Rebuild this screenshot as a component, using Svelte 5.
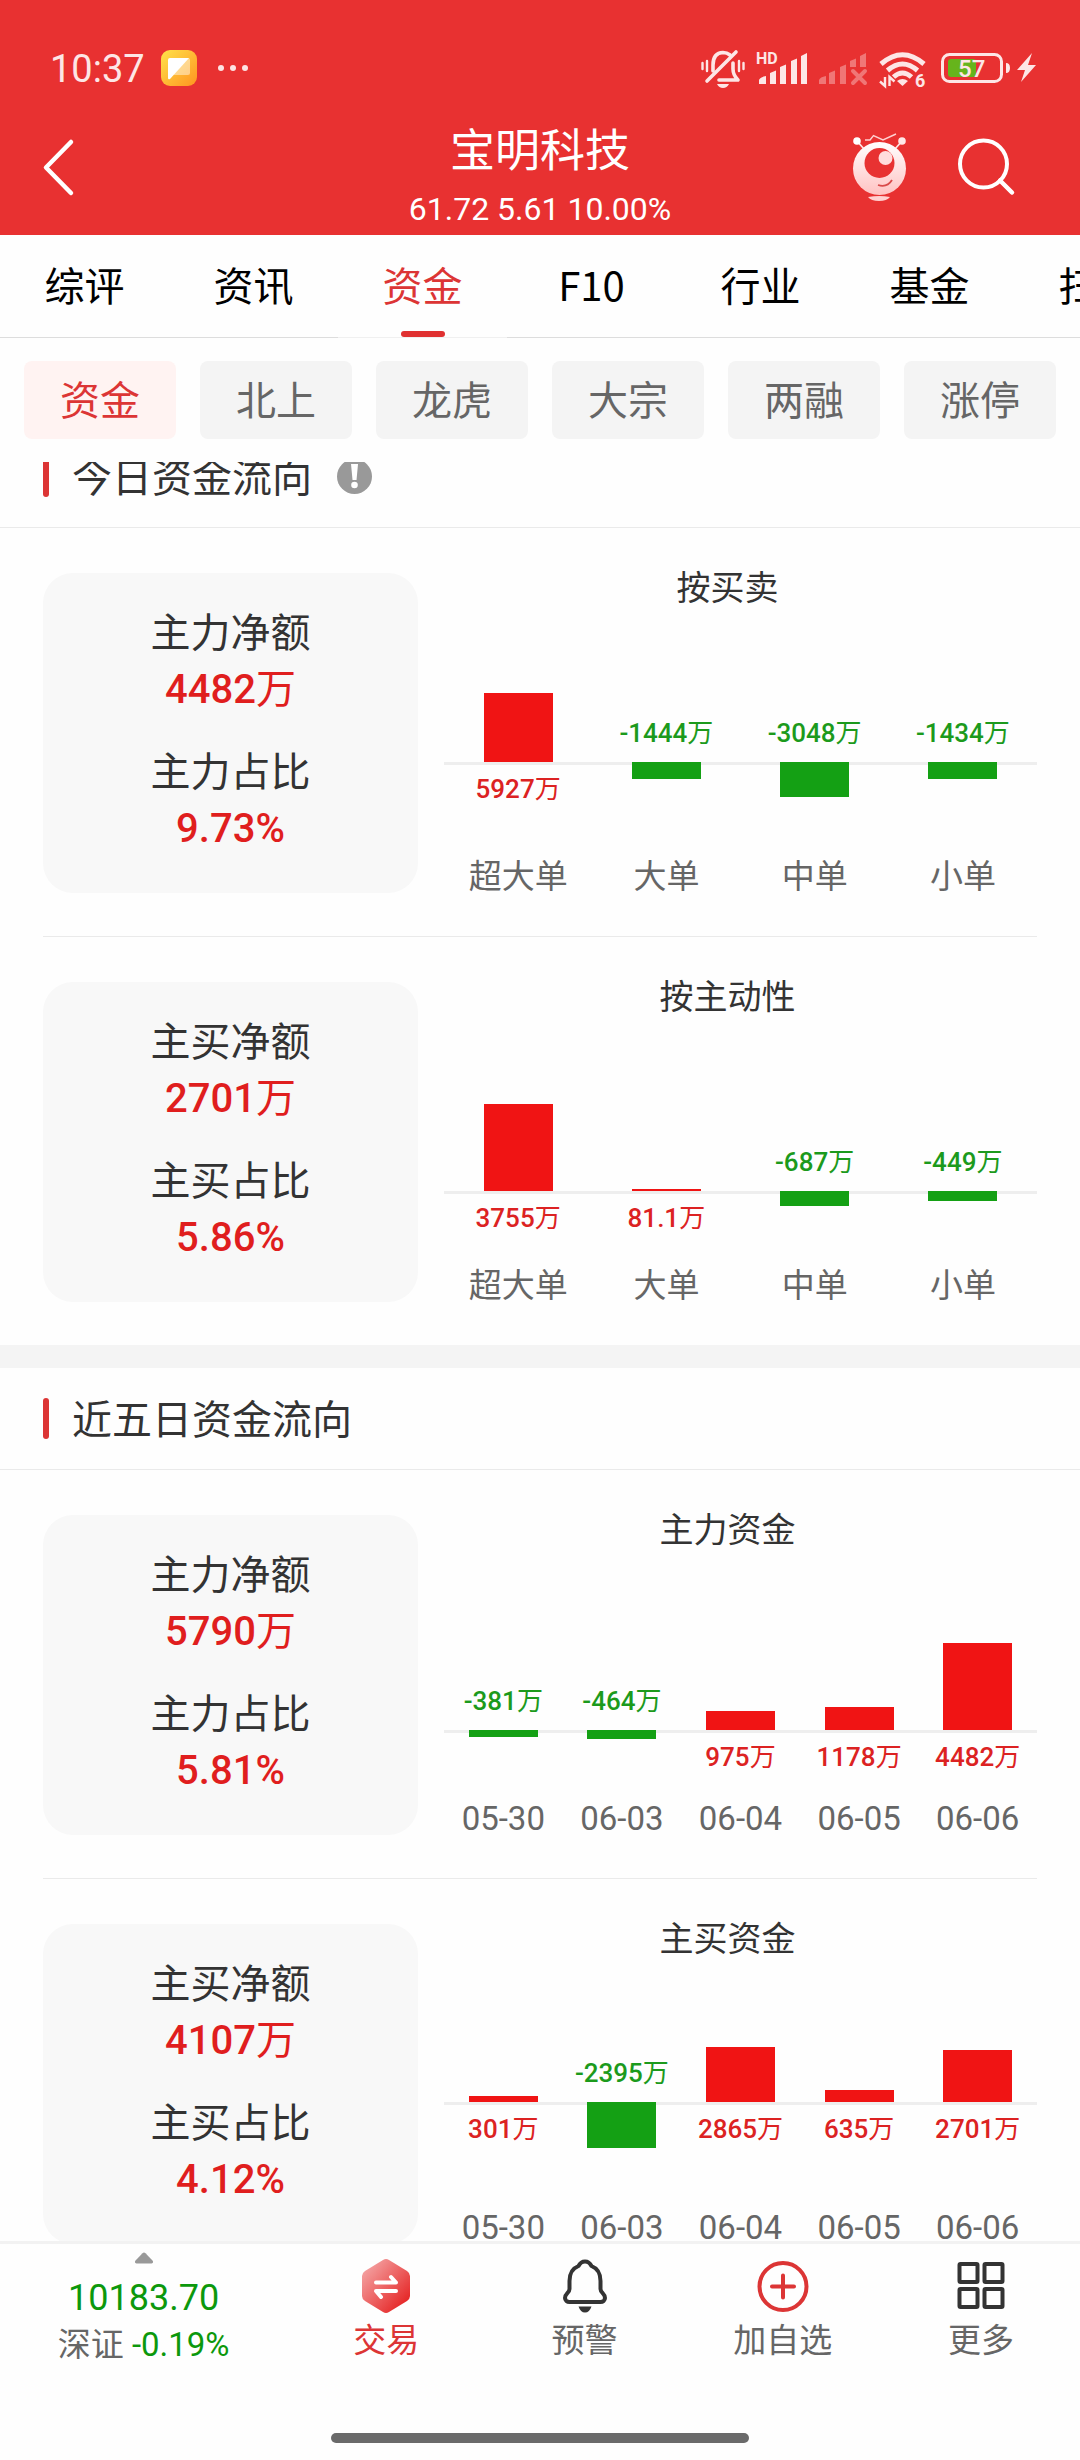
<script>
  const tabs = ['综评', '资讯', '资金', 'F10', '行业', '基金', '扫雷'];
  const filters = ['资金', '北上', '龙虎', '大宗', '两融', '涨停'];
  let tab = $state('资金');
  let filter = $state('资金');

  const sizes = ['超大单', '大单', '中单', '小单'];
  const days = ['05-30', '06-03', '06-04', '06-05', '06-06'];

  // bars: [amount, signed bar length]; a positive length rises above the axis
  const sections = [
    {
      title: '今日资金流向',
      info: true,
      blocks: [
        {
          name: '主力', amount: '4482', ratio: '9.73%', chart: '按买卖', labels: sizes,
          bars: [['5927', 69], ['-1444', -17], ['-3048', -35], ['-1434', -17]]
        },
        {
          name: '主买', amount: '2701', ratio: '5.86%', chart: '按主动性', labels: sizes,
          bars: [['3755', 87], ['81.1', 2], ['-687', -15], ['-449', -10]]
        }
      ]
    },
    {
      title: '近五日资金流向',
      info: false,
      blocks: [
        {
          name: '主力', amount: '5790', ratio: '5.81%', chart: '主力资金', labels: days,
          bars: [['-381', -7], ['-464', -9], ['975', 19], ['1178', 23], ['4482', 87]]
        },
        {
          name: '主买', amount: '4107', ratio: '4.12%', chart: '主买资金', labels: days,
          bars: [['301', 6], ['-2395', -46], ['2865', 55], ['635', 12], ['2701', 52]]
        }
      ]
    }
  ];

  const depth = (bars) => Math.max(...bars.map((b) => -b[1]));
</script>

<div class="app">
  <header>
    <div class="status">
      <span class="clock">10:37</span>
      <svg class="note" width="36" height="36" viewBox="0 0 36 36" aria-hidden="true">
        <defs>
          <linearGradient id="noteBg" x1="0" y1="0" x2="1" y2="1">
            <stop offset="0" stop-color="#ffe24a" />
            <stop offset="1" stop-color="#ff9420" />
          </linearGradient>
        </defs>
        <rect width="36" height="36" rx="9" fill="url(#noteBg)" />
        <path d="M9 8h18a2 2 0 0 1 2 2v13a2 2 0 0 1-2 2H13z" fill="#fff" opacity=".45" />
        <path d="M9 8h19L9 29q-2 1-2-1V10q0-2 2-2z" fill="#fff" />
      </svg>
      <svg width="32" height="8" viewBox="0 0 32 8" fill="#fde3e3" aria-hidden="true">
        <circle cx="4" cy="4" r="3" /><circle cx="16" cy="4" r="3" /><circle cx="28" cy="4" r="3" />
      </svg>
      <svg class="indicators" width="340" height="44" viewBox="700 46 340 44" fill="#fde6e6" aria-hidden="true">
        <g fill="none" stroke="#fde6e6" stroke-width="3.6" stroke-linecap="round">
          <path d="M713 71v-6q0-12 10-12.500q4 0 7 2.500" />
          <path d="M733 63v6q0 6 5 11h-19" stroke-linejoin="round" />
          <path d="M707 81L736 52" />
          <path d="M702.500 63v6M707 61v10M743.500 63v6M739 61v10" stroke-width="2.400" />
        </g>
        <path d="M717 84h12q-2 4-6 4t-6-4z" />
        <text x="756" y="64" font-size="16" font-weight="700">HD</text>
        <path d="M759 84v-4q1-3 7-4v8zM770 84V73l6-2.500V84zM780 84V67l6-2.500V84zM791 84V61l6-2.500V84zM801 84V56l6-3v31z" />
        <g opacity=".38">
          <path d="M819 84v-4q1-3 7-4v8zM829 84V73l6-2.500V84zM840 84V67l6-2.500V84zM850 67v-6l6-2.500V67zM860 67V56l6-3v14z" />
          <path d="M853 71l12 12M865 71l-12 12" stroke="#fde6e6" stroke-width="4" stroke-linecap="round" />
        </g>
        <g fill="none" stroke="#fde6e6" stroke-width="5">
          <path d="M881 64q21.500-18.500 43 0" />
          <path d="M887.500 70.500q15-13 30 0" />
          <path d="M893.500 77q9-8 18 0" />
        </g>
        <path d="M897 81q5.500-4 11 0l-5.500 5z" />
        <path d="M885 77v9l-5-4.500M889.500 86v-9l5 4.500" fill="none" stroke="#fde6e6" stroke-width="2.400" />
        <text x="915" y="87" font-size="18" font-weight="700">6</text>
        <rect x="942.500" y="54.500" width="59" height="27" rx="7" fill="none" stroke="#fde6e6" stroke-width="3" />
        <rect x="948" y="59" width="28" height="18" rx="3" fill="#66b41c" />
        <text x="958" y="77" font-size="24" font-weight="500">57</text>
        <path d="M1006 63q4 0 4 5t-4 5z" />
        <path d="M1032 53l-15 17h8l-4 12 15-17h-8z" />
      </svg>
    </div>
    <div class="bar">
      <button class="icon back" aria-label="返回">
        <svg width="36" height="60" viewBox="40 137 36 60" fill="none" stroke="#fff" stroke-width="4.500" stroke-linecap="round" stroke-linejoin="round">
          <path d="M71 142L46 167.500L71 193" />
        </svg>
      </button>
      <div class="heading">
        <h1>宝明科技</h1>
        <p>61.72 5.61 10.00%</p>
      </div>
      <div class="actions">
        <button class="icon" aria-label="智能助手">
          <svg width="60" height="72" viewBox="850 131 60 72">
            <defs>
              <linearGradient id="botBody" x1="0" y1="0" x2="0" y2="1">
                <stop offset="0" stop-color="#fff" />
                <stop offset="1" stop-color="#ffc2c2" />
              </linearGradient>
            </defs>
            <path d="M857 141l7 8M902 141l-7 8" stroke="#ffe4e4" stroke-width="1.800" />
            <circle cx="857" cy="141" r="3.800" fill="#fff" />
            <circle cx="902" cy="141" r="3.800" fill="#ffe8e8" />
            <path d="M865 140h5l3.500-4.500 9.500 4.500 13-6" fill="none" stroke="#ffd0d0" stroke-width="1.400" />
            <circle cx="879.500" cy="168.500" r="26.500" fill="url(#botBody)" />
            <circle cx="879.500" cy="163" r="15" fill="#e83232" />
            <circle cx="885.500" cy="158" r="7" fill="#ffdcdc" />
            <path d="M878 185q9 3 14-5" fill="none" stroke="#d94a4a" stroke-width="1.800" />
            <path d="M868 197q11.500-2 22 0q-3 4-11 4t-11-4z" fill="#ffd0d0" />
          </svg>
        </button>
        <button class="icon" aria-label="搜索">
          <svg width="64" height="64" viewBox="954 136 64 64" fill="none" stroke="#fff" stroke-width="4" stroke-linecap="round">
            <circle cx="983.500" cy="165" r="23.500" />
            <path d="M1000 181.500L1012 193.500" stroke-width="4.500" />
          </svg>
        </button>
      </div>
    </div>
  </header>

  <nav class="tabs">
    {#each tabs as t}
      <button class:active={t === tab} onclick={() => (tab = t)}>{t}</button>
    {/each}
  </nav>

  <div class="filters">
    {#each filters as f}
      <button class:active={f === filter} onclick={() => (filter = f)}>{f}</button>
    {/each}
  </div>

  <main>
    <div class="content">
      {#each sections as s}
        <section>
          <h2>
            <span class="title">{s.title}</span>
            {#if s.info}
              <button class="icon" aria-label="说明">
                <svg width="35" height="35" viewBox="0 0 35 35">
                  <circle cx="17.500" cy="17.500" r="17.500" fill="#999" />
                  <path d="M14 5h7l-1.500 16h-4z" fill="#fff" />
                  <circle cx="17.500" cy="26" r="3.300" fill="#fff" />
                </svg>
              </button>
            {/if}
          </h2>
          {#each s.blocks as b}
            <div class="block">
              <dl class="card">
                <div>
                  <dt>{b.name}净额</dt>
                  <dd>{b.amount}<span class="unit">万</span></dd>
                </div>
                <div>
                  <dt>{b.name}占比</dt>
                  <dd>{b.ratio}</dd>
                </div>
              </dl>
              <figure>
                <figcaption>{b.chart}</figcaption>
                <div class="plot">
                  <div class="above">
                    {#each b.bars as [amount, len]}
                      <div class="cell">
                        {#if len > 0}
                          <i class="up" style="height:{len}px"></i>
                        {:else}
                          <span class="down-text">{amount}<span class="unit">万</span></span>
                        {/if}
                      </div>
                    {/each}
                  </div>
                  <div class="below" style="height:{depth(b.bars)}px">
                    {#each b.bars as [amount, len]}
                      <div class="cell">
                        {#if len > 0}
                          <span class="up-text">{amount}<span class="unit">万</span></span>
                        {:else}
                          <i class="down" style="height:{-len}px"></i>
                        {/if}
                      </div>
                    {/each}
                  </div>
                </div>
                <div class="labels">
                  {#each b.labels as l}<span>{l}</span>{/each}
                </div>
              </figure>
            </div>
          {/each}
        </section>
      {/each}
    </div>
  </main>

  <footer>
    <nav class="dock">
      <button class="index">
        <svg width="20" height="12" viewBox="0 0 20 12" aria-hidden="true">
          <path d="M8.500 1.200q1.500-1.400 3 0l7 7.300q1.500 2.500-1 3h-15q-2.500-.5-1-3z" fill="#999" />
        </svg>
        <span class="points">10183.70</span>
        <span class="change">深证 <b>-0.19%</b></span>
      </button>
      <button class="trade">
        <svg width="56" height="56" viewBox="0 0 56 56" aria-hidden="true">
          <defs>
            <linearGradient id="hex" x1="0" y1="0" x2="1" y2="1">
              <stop offset="0.100" stop-color="#f4a3a3" />
              <stop offset="0.850" stop-color="#e62a2a" />
            </linearGradient>
          </defs>
          <path d="M25 2q3-1.800 6 0l18 11q3 2 3 5v20q0 3-3 5L31 54q-3 1.800-6 0L7 43q-3-2-3-5V18q0-3 3-5z" fill="url(#hex)" />
          <path d="M18 24.500h20l-5-5.500M38 33H18l5 6" fill="none" stroke="#fff" stroke-width="4" stroke-linecap="round" stroke-linejoin="round" />
        </svg>
        交易
      </button>
      <button>
        <svg width="56" height="56" viewBox="0 0 56 56" aria-hidden="true">
          <path d="M28 3.500c-4 0-5.500 2.500-6.500 4.500C15 10.500 12.500 16 12.500 23v8c0 4-4.500 4.500-4.500 9 0 2.500 2 4 4.500 4h31c2.500 0 4.500-1.500 4.500-4 0-4.500-4.500-5-4.500-9v-8c0-7-2.500-12.500-9-15-1-2-2.500-4.500-6.500-4.500z" fill="none" stroke="#333" stroke-width="4" stroke-linejoin="round" />
          <path d="M21.500 48.500h13q-2 6-6.500 6t-6.500-6z" fill="#333" />
        </svg>
        预警
      </button>
      <button>
        <svg width="56" height="56" viewBox="0 0 56 56" fill="none" stroke="#dc3535" stroke-width="4" stroke-linecap="round" aria-hidden="true">
          <circle cx="28" cy="28.500" r="23.500" />
          <path d="M17 28.500h22M28 17.500v22" />
        </svg>
        加自选
      </button>
      <button>
        <svg width="56" height="56" viewBox="0 0 56 56" fill="none" stroke="#333" stroke-width="4" stroke-linejoin="round" aria-hidden="true">
          <rect x="6.500" y="6" width="18" height="18" rx="1" /><rect x="31.500" y="6" width="18" height="18" rx="1" />
          <rect x="6.500" y="31" width="18" height="18" rx="1" /><rect x="31.500" y="31" width="18" height="18" rx="1" />
        </svg>
        更多
      </button>
    </nav>
    <div class="home"></div>
  </footer>
</div>

<style>
  :global(body) { margin: 0; background: #fefefe; }
  .app {
    display: flex;
    flex-direction: column;
    height: 100vh;
    overflow: hidden;
    background: #fefefe;
    color: #333;
    font-family: Roboto, "Noto Sans CJK SC", sans-serif;
    font-size: 40px;
  }
  button {
    border: 0;
    padding: 0;
    background: none;
    color: inherit;
    font: inherit;
    cursor: pointer;
  }
  svg { display: block; flex: none; }
  h1, h2, p, dl, dd, figure { margin: 0; font-weight: 400; }

  header { background: #e83131; color: #fff; height: 235px; flex: none; }
  .status { display: flex; align-items: center; padding: 46px 40px 0 50px; height: 44px; }
  .clock { font-size: 38px; line-height: 44px; padding-top: 2px; color: #fde6e6; }
  .note { margin: 0 20px 0 16px; }
  .indicators { margin-left: auto; }
  .bar { display: grid; grid-template-columns: 1fr auto 1fr; align-items: start; padding: 34px 62px 0 40px; }
  .icon { display: flex; }
  .back { justify-self: start; padding-top: 13px; }
  .heading { text-align: center; padding-left: 22px; }
  h1 { font-size: 45px; line-height: 52px; padding-top: 2px; }
  .heading p { font-size: 32px; line-height: 36px; margin-top: 13px; }
  .actions { display: flex; align-items: center; gap: 44px; justify-self: end; padding-top: 7px; }

  .tabs { display: flex; flex: none; overflow: hidden; color: #000; font-family: "Noto Sans CJK SC", sans-serif; }
  .tabs button {
    flex: 0 0 169px;
    height: 103px;
    padding-bottom: 4px;
    border-bottom: 1px solid #ddd;
    position: relative;
  }
  .tabs .active { color: #dc3535; border-color: #f0f0f0; }
  .tabs .active::after {
    content: "";
    position: absolute;
    left: 50%;
    bottom: 0;
    width: 44px;
    height: 6px;
    margin-left: -22px;
    border-radius: 3px;
    background: #e03131;
  }

  .filters { display: flex; gap: 24px; padding: 23px 24px; flex: none; }
  .filters button { flex: 1; height: 78px; padding-bottom: 4px; border-radius: 8px; background: #f4f4f4; color: #666; }
  .filters .active { background: #fff3f2; color: #dc3535; }

  main { flex: 1; min-height: 0; overflow: hidden; }
  .content { margin-top: -36px; }
  section + section { border-top: 23px solid #f4f4f4; }
  h2 {
    display: flex;
    align-items: center;
    height: 101px;
    padding: 0 43px;
    border-bottom: 1px solid #eaeaea;
    font-size: 40px;
  }
  h2::before { content: ""; width: 6px; height: 41px; margin-right: 23px; border-radius: 3px; background: #dc3535; }
  .title { padding-bottom: 4px; }
  h2 .icon { margin-left: 25px; }

  .block { display: flex; margin: 0 43px; padding: 45px 0 43px; }
  .block + .block { border-top: 1px solid #eaeaea; }
  .card {
    flex: 375;
    box-sizing: border-box;
    display: flex;
    flex-direction: column;
    gap: 27px;
    padding: 33px 0 36px;
    border-radius: 30px;
    background: #f8f8f8;
    text-align: center;
    line-height: 56px;
  }
  dd { color: #e01e1e; font-weight: 500; }
  .unit { font-weight: 400; }

  figure { flex: 619; display: flex; flex-direction: column; }
  figcaption { text-align: center; font-size: 34px; line-height: 30px; }
  .plot { flex: 1; display: flex; flex-direction: column; margin: 0 0 60px 26px; font-size: 26px; font-weight: 500; line-height: 30px; }
  .above { flex: 1; display: flex; align-items: flex-end; }
  .below { display: flex; align-items: flex-start; box-shadow: inset 0 3px #eee; }
  .cell { flex: 1 1 0; display: flex; justify-content: center; white-space: nowrap; }
  .up, .down { width: 69px; }
  .up { background: #f01414; }
  .down { background: #14a014; }
  .up-text { color: #dc2222; margin-top: 12px; }
  .down-text { color: #1c9a1c; margin-bottom: 14px; }
  .labels { display: flex; margin: 2px 0 -2px 26px; font-size: 33px; line-height: 36px; color: #666; text-align: center; }
  .labels span { flex: 1 1 0; }

  footer { flex: none; height: 216px; border-top: 3px solid #f2f2f2; background: #fefefe; display: flex; flex-direction: column; justify-content: space-between; }
  .dock { display: flex; color: #666; font-size: 33px; line-height: 40px; }
  .dock button { flex: 198; display: flex; flex-direction: column; align-items: center; gap: 7px; padding-top: 14px; }
  .dock .trade { color: #dc3535; }
  .dock .index { flex: 287; gap: 0; padding-top: 8px; }
  .points { color: #0c980c; font-size: 36px; line-height: 44px; margin-top: 12px; }
  .change { font-size: 33px; line-height: 44px; margin-top: 3px; }
  .change b { color: #0c980c; font-weight: 400; }
  .home { align-self: center; width: 418px; height: 10px; border-radius: 5px; background: #6a6a6a; margin-bottom: 17px; }
</style>
